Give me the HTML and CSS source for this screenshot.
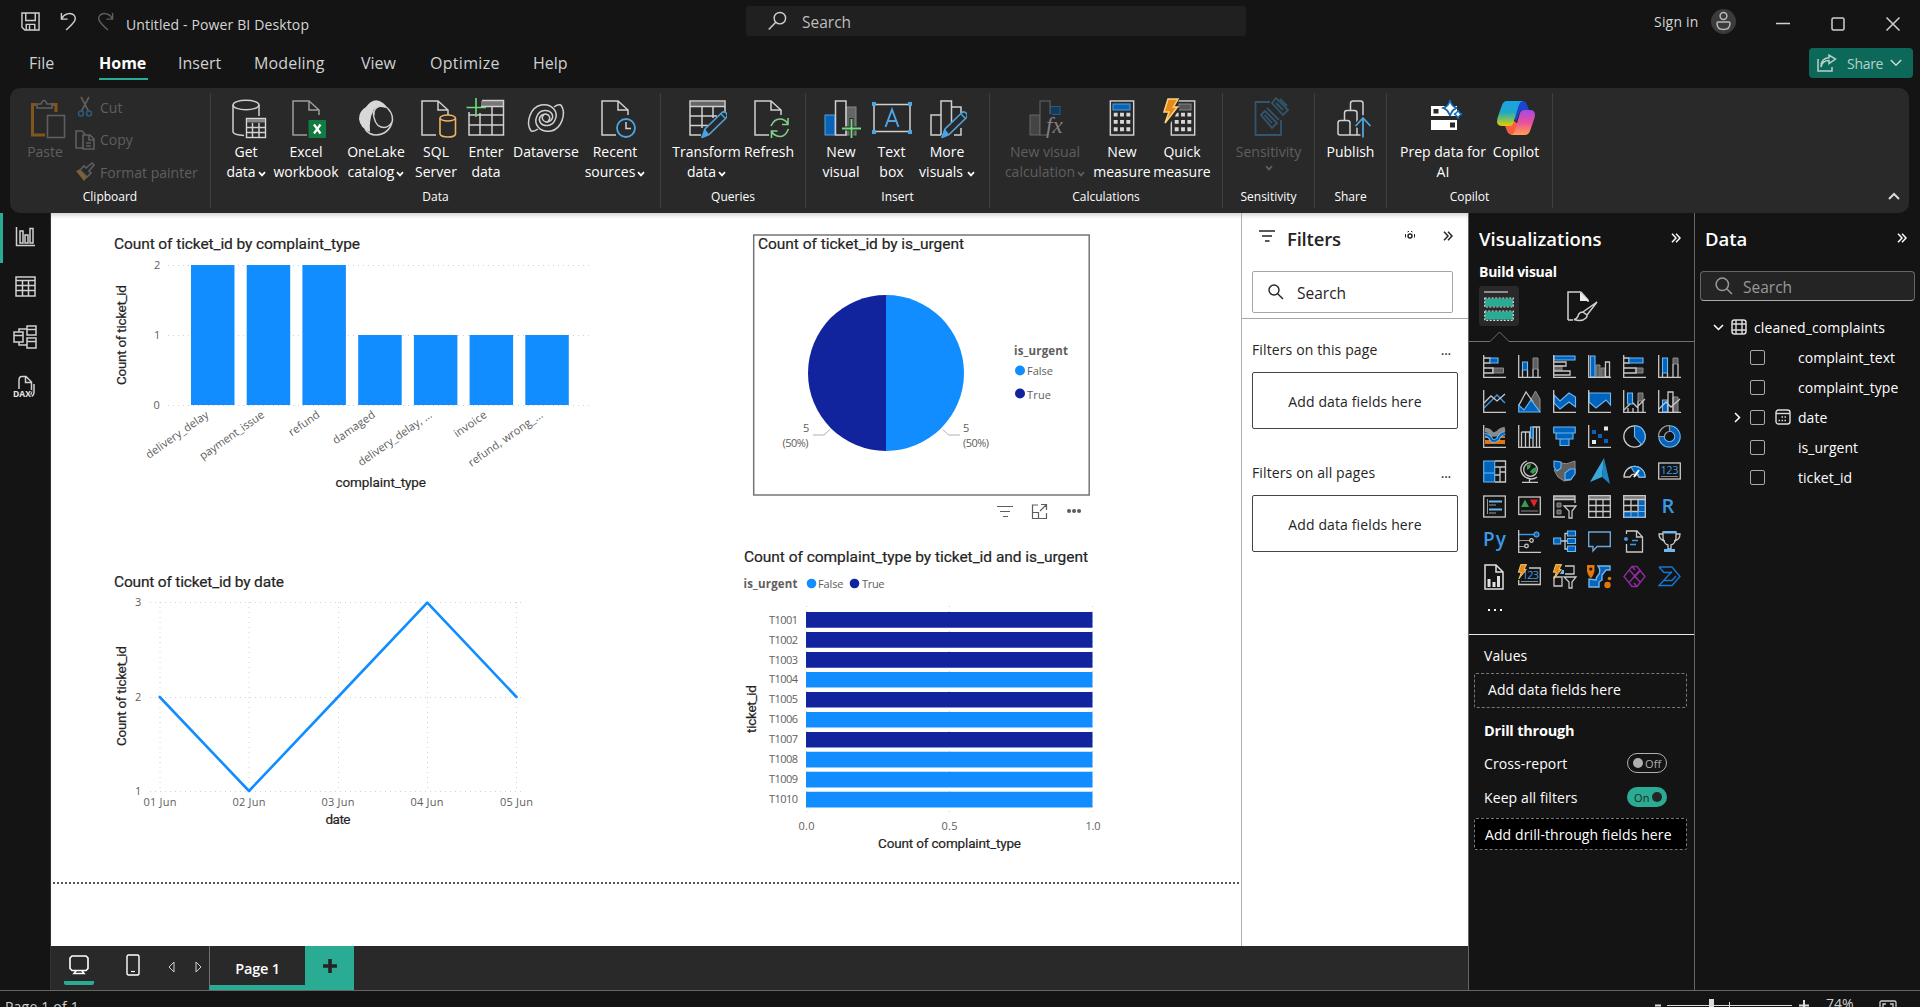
FILE: index.html
```html
<!DOCTYPE html>
<html lang="en">
<head>
<meta charset="utf-8">
<title>Untitled - Power BI Desktop</title>
<link rel="stylesheet" href="styles.css">
</head>
<body>
<svg class="defs" width="0" height="0">
  <defs>
    <symbol id="doc" viewBox="0 0 40 40"><path class="w" d="M33 17V12L23 3H7V37H21M23 3V12H33"/></symbol>
    <symbol id="pencil" viewBox="0 0 40 40"><path d="M15 39.5L18 31L35 14.5Q37 13 39.5 15.5Q41 18 39 20L22 36.5Z" fill="#292929" stroke="#4fa3e0" stroke-width="1.6"/><path d="M15 39.5L18 31L22 36.5Z" fill="#4fa3e0"/><path d="M34 16L38 20" stroke="#4fa3e0" stroke-width="1.4"/></symbol>
    <symbol id="calc" viewBox="0 0 26 37"><rect class="w" x="1" y="1" width="24" height="35"/><path fill="#d8d8d8" d="M4.500 13h4v4h-4zM11 13h4v4h-4zM17.500 13h4v4h-4zM4.500 20.500h4v4h-4zM11 20.500h4v4h-4zM17.500 20.500h4v4h-4zM4.500 28h4v4h-4zM11 28h4v4h-4zM17.500 28h4v4h-4z"/></symbol>
    <symbol id="chev" viewBox="0 0 8 6"><path d="M1 1.200L4 4.400L7 1.200" fill="none" stroke="currentColor" stroke-width="1.700"/></symbol>
    <symbol id="dbl" viewBox="0 0 10 10"><path d="M1 .8L5 5L1 9.200M5 .8L9 5L5 9.200" fill="none" stroke="currentColor" stroke-width="1.500"/></symbol>
    <symbol id="bolt" viewBox="0 0 18 27"><path d="M6 1H16L11.500 9H15.500L3 25L7 14H2Z" fill="#e58a1a" stroke="#ffd27a" stroke-width="1.500"/></symbol>
    <symbol id="axes" viewBox="0 0 23 23"><path class="v" d="M.7 0V22.300H23"/></symbol>
  </defs>
</svg>

<header class="titlebar">
  <svg class="save" viewBox="0 0 20 20"><path class="w" d="M1 1H19V19H4L1 16ZM5 1V9H15V1M5.500 19V13H14.500V19M9 14V19"/></svg>
  <svg class="undo" viewBox="0 0 18 20"><path class="w" d="M1.500 1V7.500H8M1.500 7.500C4 2 11 -.5 15 3.500C18.500 8 14 12 6.500 19"/></svg>
  <svg class="redo" viewBox="0 0 18 20"><path class="w" d="M16.500 1V7.500H10M16.500 7.500C14 2 7 -.5 3 3.500C-.5 8 4 12 11.500 19"/></svg>
  <span class="doc-title">Untitled - Power BI Desktop</span>
  <div class="top-search">
    <svg viewBox="0 0 20 20"><circle cx="12.500" cy="7" r="6" class="w"/><path class="w" d="M8.200 11.200L.8 19"/></svg>
    <span>Search</span>
  </div>
  <span class="signin">Sign in</span>
  <svg class="avatar" viewBox="0 0 25 25"><circle cx="12.500" cy="12.500" r="12.500" fill="#3b3b3b"/><circle class="a" cx="12.500" cy="7" r="3.400"/><path class="a" d="M6 14.200Q6 13 7.200 13H17.800Q19 13 19 14.200Q19 20.500 12.500 20.500Q6 20.500 6 14.200Z"/></svg>
  <svg class="wbtn min" viewBox="0 0 14 14"><path class="w" d="M0 6.500H14"/></svg>
  <svg class="wbtn max" viewBox="0 0 14 14"><rect class="w" x="1" y="1" width="12" height="12" rx="1.500"/></svg>
  <svg class="wbtn close" viewBox="0 0 14 14"><path class="w" d="M.5 .5L13.500 13.500M13.500 .5L.5 13.500"/></svg>
</header>

<nav class="tabs">
  <span class="t-file">File</span><span class="t-home on">Home</span><span class="t-ins">Insert</span><span class="t-mod">Modeling</span><span class="t-view">View</span><span class="t-opt">Optimize</span><span class="t-help">Help</span>
  <div class="share">
    <svg class="share-i" viewBox="0 0 20 18"><path fill="none" stroke="#b7d0cb" stroke-width="1.500" d="M1 5V17H15V13M4 13C5 8 8 6.500 12 6.500V9.500L18.500 5L12 1V3.800C7 4 4 7 4 13Z"/></svg>
    <span>Share</span>
    <svg class="share-c" viewBox="0 0 12 8"><path fill="none" stroke="#c9dbd7" stroke-width="1.500" d="M.8 1L6 6.300L11.200 1"/></svg>
  </div>
</nav>

<section class="ribbon">
  <div class="group g-clip">
    <div class="clip-body">
      <div class="rb dim paste">
        <svg class="ri" viewBox="0 0 40 40"><path d="M11 6.500H7.500V37H20M25 6.500H31V14" fill="none" stroke="#80561f" stroke-width="3"/><path d="M12 10V6H16Q19 -1 22 6H27V10Z" class="dg"/><rect x="22.500" y="17.500" width="17" height="22" class="dg"/></svg>
        <span>Paste</span>
      </div>
      <div class="clip-list dim">
        <div><svg viewBox="0 0 20 20"><path class="dg" d="M6 0L13.500 14M14 0L6.500 14"/><circle cx="6" cy="16.500" r="2.500" class="db"/><circle cx="14" cy="16.500" r="2.500" class="db"/></svg><span class="l-cut">Cut</span></div>
        <div><svg viewBox="0 0 20 20"><path class="dg" d="M8 18H1V1H7L10 4M8 5H15L19 9V19H8ZM14 5V10H19M11 13H16M11 16H16"/></svg><span class="l-copy">Copy</span></div>
        <div><svg viewBox="0 0 20 20"><path d="M1 9L9 19L13 14L6 7Z" fill="#80622e"/><path class="dg" d="M5 8L12 15L16 11L14 9L19 3L17 1L11 6L9 4Z"/></svg><span class="l-fmt">Format painter</span></div>
      </div>
    </div>
    <div class="gl">Clipboard</div>
  </div>

  <div class="group g-data">
    <div class="row">
      <div class="rb w48"><svg class="ri" viewBox="0 0 40 40"><path class="w" d="M7 7V34Q8 37 18 37.500M33 7V18"/><ellipse class="w" cx="20" cy="7" rx="13" ry="4.800"/><rect x="20.500" y="20.500" width="19" height="19" fill="#292929" stroke="#d8d8d8" stroke-width="1.400"/><path fill="#888" d="M21 21h18v3.500H21z"/><path class="w" d="M21 29.500H39M21 34.500H39M26.500 25V39M33 25V39"/></svg><span>Get</span><span>data<svg class="ch"><use href="#chev"/></svg></span></div>
      <div class="rb w72"><svg class="ri" viewBox="0 0 40 40"><use href="#doc" opacity=".7"/><rect x="22.500" y="22" width="17.500" height="18" fill="#107c41"/><path d="M28 26.500L34.500 35.500M34.500 26.500L28 35.500" stroke="#fff" stroke-width="2.200"/></svg><span>Excel</span><span>workbook</span></div>
      <div class="rb w68"><svg class="ri" viewBox="0 0 40 40"><path d="M10 9Q18 -2 27 5Q31 8 30 10Q20 7 17 13Q13 22 14 34Q4 30 3 21Q3 13 10 9Z" fill="#d8d8d8"/><path class="w" d="M29 8Q37 14 36.500 22Q34 36 20 37Q13 37 9 31M17 13Q18 27 25 29Q32 31 36 24M24 8Q17 10 18 17"/></svg><span>OneLake</span><span>catalog<svg class="ch"><use href="#chev"/></svg></span></div>
      <div class="rb w52"><svg class="ri" viewBox="0 0 40 40"><use href="#doc" x="-1"/><path d="M24 20V36Q25 39 32 39T39.500 36V20" fill="#292929" stroke="#f0b266" stroke-width="1.600"/><ellipse cx="31.700" cy="20" rx="7.700" ry="3" fill="#292929" stroke="#f0b266" stroke-width="1.600"/></svg><span>SQL</span><span>Server</span></div>
      <div class="rb w48"><svg class="ri" viewBox="0 0 40 40"><path fill="#777" d="M15 3H37V8H15z"/><path class="w" d="M16 2.500H37.500V37H3V14M3 17H37.500M3 27H37.500M14 15V37M26 9V37M15 8.500H37"/><path d="M10 0V19M.5 9.500H20" stroke="#6fdc7c" stroke-width="1.600"/></svg><span>Enter</span><span>data</span></div>
      <div class="rb w72"><svg class="ri" viewBox="0 0 40 40"><g class="w"><path d="M5 33C-1 24 5 9 15 7C26 5 33 14 29 22C26 29 17 29 14 24C12 20 15 16 20 16C24 17 25 21 22 23"/><path d="M35 7C41 16 35 31 25 33C14 35 7 26 11 18C14 11 23 11 26 16C28 20 25 24 20 24C16 23 15 19 18 17M5 33Q8 34 12 31M35 7Q32 6 28 9"/></g></svg><span>Dataverse</span></div>
      <div class="rb w66"><svg class="ri" viewBox="0 0 40 40"><use href="#doc"/><circle cx="31" cy="30" r="9" fill="#292929" stroke="#4fa3e0" stroke-width="1.800"/><path class="w" d="M31 24V30.500H36"/></svg><span>Recent</span><span>sources<svg class="ch"><use href="#chev"/></svg></span></div>
    </div>
    <div class="gl">Data</div>
  </div>

  <div class="group g-q">
    <div class="row">
      <div class="rb w71"><svg class="ri" viewBox="0 0 40 40"><path fill="#666" d="M3.500 4h34v4h-34z"/><path class="w" d="M38 14V3H3V37H14M3 8.500H38M3 18H30M3 27.500H21M15 9V30M26 9V20"/><use href="#pencil"/></svg><span>Transform</span><span>data<svg class="ch"><use href="#chev"/></svg></span></div>
      <div class="rb w54"><svg class="ri" viewBox="0 0 40 40"><use href="#doc" x="-1"/><path d="M22 28Q25 21 31 21Q36 21 39 26M39 20V26.500H33M39.500 31Q36 39 31 38.500Q25 38 22.500 33.500M22.500 40V33H28.500" fill="none" stroke="#7fd08a" stroke-width="1.600"/></svg><span>Refresh</span></div>
    </div>
    <div class="gl">Queries</div>
  </div>

  <div class="group g-i">
    <div class="row">
      <div class="rb w48"><svg class="ri" viewBox="0 0 40 40"><rect x="25" y="9" width="10" height="28" fill="#666" stroke="#888"/><rect x="4" y="17" width="10" height="20" fill="#0a63b8" stroke="#4fa3e0"/><rect class="w" x="14.500" y="3" width="10.500" height="34"/><path d="M21 30.500H40M30.500 20V40" stroke="#292929" stroke-width="4"/><path d="M21 30.500H40M30.500 21V40" stroke="#6fdc7c" stroke-width="1.800"/></svg><span>New</span><span>visual</span></div>
      <div class="rb w53"><svg class="ri" viewBox="0 0 40 40"><rect class="w" x="2" y="6.500" width="36" height="27"/><path fill="#4fa3e0" d="M0 4h4v4H0zM36 4h4v4h-4zM0 32h4v4H0zM36 32h4v4h-4z"/><path d="M13.500 29L20 11.500L26.500 29M15.500 23H24.500" fill="none" stroke="#4fa3e0" stroke-width="2"/></svg><span>Text</span><span>box</span></div>
      <div class="rb w58"><svg class="ri" viewBox="0 0 40 40"><path class="w" d="M14 37H4V17H14M14 37V3H24.500V24M25 9H34V15M27 37H34V30"/><use href="#pencil"/></svg><span>More</span><span>visuals<svg class="ch sp"><use href="#chev"/></svg></span></div>
    </div>
    <div class="gl">Insert</div>
  </div>

  <div class="group g-c">
    <div class="row">
      <div class="rb w90 dim"><svg class="ri" viewBox="0 0 40 40"><rect x="25" y="8.500" width="10" height="8" fill="#103a5e" stroke="#2a5c80"/><rect x="5" y="17" width="10" height="20" fill="#444" stroke="#666"/><rect x="15" y="3" width="10" height="34" fill="#292929" stroke="#666"/><path stroke="#292929" stroke-width="4" d="M25 16L25 40"/><text x="21" y="35" class="fx">fx</text></svg><span>New visual</span><span>calculation<svg class="ch"><use href="#chev"/></svg></span></div>
      <div class="rb w64"><svg class="ri" viewBox="0 0 40 40"><use href="#calc" x="7" y="2" width="26" height="36"/><rect x="11" y="6" width="17" height="6" fill="#0a63b8" stroke="#4fa3e0"/></svg><span>New</span><span>measure</span></div>
      <div class="rb w56"><svg class="ri" viewBox="0 0 40 40"><use href="#calc" x="8" y="2" width="26" height="36"/><rect x="17" y="6" width="12" height="6" fill="#555" stroke="#888"/><path d="M5 0H18L14 9L18 10L8 26H3Z" fill="#292929"/><use href="#bolt" x="0" y="0" width="18" height="27"/></svg><span>Quick</span><span>measure</span></div>
    </div>
    <div class="gl">Calculations</div>
  </div>

  <div class="group g-s">
    <div class="row">
      <div class="rb w92 dim"><svg class="ri" viewBox="0 0 40 40"><g fill="none" stroke="#31566e" stroke-width="1.800"><path d="M21 4H6.500V37H32V22"/><path d="M12 17L16 13L28 25L23 30ZM15.500 17L23 25M18 10L30 22M23 5L27 0L39 12L34 17ZM27 5L34 12M31 1L38 8"/></g></svg><span>Sensitivity</span><span><svg class="ch solo"><use href="#chev"/></svg></span></div>
    </div>
    <div class="gl">Sensitivity</div>
  </div>

  <div class="group g-p">
    <div class="row">
      <div class="rb w72"><svg class="ri" viewBox="0 0 40 40"><path class="w" d="M30 37H9Q7 37 7 35V25Q7 22.500 9.500 22.500H16.500Q19 22.500 19 25V37M13.500 22V15Q13.500 12.500 16 12.500H23.500Q26 12.500 26 15V37M19.500 12V5.500Q19.500 3 22 3H29.500Q32 3 32 5.500V18"/><path d="M32 39.500V21M24.500 28.500L32 20.500L39.500 28.500" fill="none" stroke="#292929" stroke-width="5"/><path d="M32 39.500V20M24.500 28L32 20L39.500 28" fill="none" stroke="#4fa3e0" stroke-width="1.800"/></svg><span>Publish</span></div>
    </div>
    <div class="gl">Share</div>
  </div>

  <div class="group g-ai">
    <div class="row">
      <div class="rb w92"><svg class="ri" viewBox="0 0 40 40"><path fill="#fff" fill-rule="evenodd" d="M8 8H34V18H8ZM10.500 11V15.500H15.500V11ZM8 22H34V32H8ZM27 24.500V29.500H32V24.500Z"/><path d="M27 0Q29 8.500 36 10Q29 11.500 27 20Q25 11.500 18 10Q25 8.500 27 0Z" fill="#292929"/><path d="M27 2Q28.500 9 34 10Q28.500 11 27 18Q25.500 11 20 10Q25.500 9 27 2Z" fill="#fff" stroke="#0c6fc0" stroke-width="1.400"/><path d="M35 12Q35.800 15.500 39 16.200Q35.800 17 35 20.500Q34 17 31 16.200Q34 15.500 35 12Z" fill="#fff" stroke="#0c6fc0" stroke-width="1.200"/></svg><span>Prep data for</span><span>AI</span></div>
      <div class="rb w54"><svg class="ri" viewBox="0 0 40 40"><defs><linearGradient id="c1" x1="0" y1="0" x2="0" y2="1"><stop offset="0" stop-color="#1aa3ea"/><stop offset=".45" stop-color="#20a7c5"/><stop offset=".75" stop-color="#7cc25a"/><stop offset="1" stop-color="#f4c800"/></linearGradient><linearGradient id="c2" x1="0" y1="0" x2="0" y2="1"><stop offset="0" stop-color="#a14be8"/><stop offset=".5" stop-color="#ec4e9b"/><stop offset="1" stop-color="#ffa24d"/></linearGradient></defs><path d="M23 3H27Q30 3 31.500 8L33 12H27Q24 12 23 16L20 24L17 17Z" fill="#1a47d0"/><path d="M9 28L11 33Q12.500 37 17 37L23 27L17 22L11 28Z" fill="#f2603d"/><path d="M11 3H27Q24 3.500 22.500 8L17 26Q16 28 13 28H6Q-.5 28 1.500 20L6 7Q7.500 3 11 3Z" fill="url(#c1)"/><path d="M29 37H15Q18 36 19 32L24 15Q25 12 28 12H34Q40.500 12 38.500 20L34 33Q32.500 37 29 37Z" fill="url(#c2)"/></svg><span>Copilot</span></div>
    </div>
    <div class="gl">Copilot</div>
  </div>
  <svg class="collapse" viewBox="0 0 12 8"><path fill="none" stroke="#d8d8d8" stroke-width="2" d="M1 7L6 2L11 7"/></svg>
</section>

<main class="work">
  <aside class="rail">
    <div class="on"><svg width="20" height="20" viewBox="0 0 20 20"><path class="w" d="M1.500 0V18.500H20M5 16V4H8V16ZM10 16V8H13V16ZM15 16V1.500H18V16Z"/></svg></div>
    <div><svg width="21" height="21" viewBox="0 0 21 21"><path class="w" d="M1 1H20V20H1ZM1 4.500H20M1 9.500H20M1 14.500H20M7.500 4.500V20M13.500 4.500V20"/></svg></div>
    <div><svg width="24" height="24" viewBox="0 0 24 24"><path class="w" d="M1 7H10V17H1ZM1 10.500H10M14 1H23V10H14ZM14 4.500H23M14 13H23V23H14ZM14 16.500H23M6 7V4H14M6 17V20H14"/></svg></div>
    <div><svg width="24" height="24" viewBox="0 0 24 24"><path class="w" d="M6 14V5Q6 1.500 9 1.500H13L18.500 7V17Q18.500 20 16 20.500M12.500 2V7.500H18M21 9V17Q21 21 17 22"/><text x="0" y="21.500" class="dax">DAX</text></svg></div>
  </aside>

  <div class="center">
    <div class="upper">
      <div class="canvas">
        <svg class="visual v-bar" width="500" height="270" viewBox="104 230 500 270">
          <text class="ct" x="114" y="249" textLength="246">Count of ticket_id by complaint_type</text>
          <path class="grid" d="M168 265.500H593M168 335.500H593M168 405.500H593"/>
          <g class="ax"><text x="154" y="269">2</text><text x="154" y="339">1</text><text x="153.500" y="409">0</text></g>
          <path fill="#118dff" d="M191 265h43.500v140H191zM246.700 265h43.500v140h-43.500zM302.400 265h43.500v140h-43.500zM358.200 335h43.500v70h-43.500zM413.900 335h43.500v70h-43.500zM469.600 335h43.500v70h-43.500zM525.300 335h43.500v70h-43.500z"/>
          <g class="cat">
            <text transform="translate(209.500 416.500) rotate(-35)" textLength="74">delivery_delay</text>
            <text transform="translate(265 416.500) rotate(-35)" textLength="76">payment_issue</text>
            <text transform="translate(320.500 416.500) rotate(-35)" textLength="35">refund</text>
            <text transform="translate(376 416.500) rotate(-35)" textLength="49">damaged</text>
            <text transform="translate(432.500 416.500) rotate(-35)" textLength="87">delivery_delay, ...</text>
            <text transform="translate(487.500 416.500) rotate(-35)" textLength="37">invoice</text>
            <text transform="translate(543.500 416.500) rotate(-35)" textLength="88">refund, wrong_...</text>
          </g>
          <text class="at" x="335.500" y="487" textLength="90.500">complaint_type</text>
          <text class="at" transform="translate(126 385) rotate(-90)" textLength="100">Count of ticket_id</text>
        </svg>

        <svg class="visual v-pie" width="340" height="290" viewBox="752 232 340 290">
          <rect x="753.700" y="235" width="335.500" height="260" fill="#fff" stroke="#767676" stroke-width="1.500"/>
          <text class="ct" x="758" y="249" textLength="206">Count of ticket_id by is_urgent</text>
          <path d="M886 295A78 78 0 0 1 886 451Z" fill="#118dff"/>
          <path d="M886 295A78 78 0 0 0 886 451Z" fill="#12239e"/>
          <path d="M813 435H824L830 429.500M943 429.500L948.500 435H960" fill="none" stroke="#b3b0ad"/>
          <g class="ax"><text x="803" y="432">5</text><text x="782.500" y="447" textLength="26">(50%)</text><text x="963" y="432">5</text><text x="963" y="447" textLength="26">(50%)</text></g>
          <text class="lt" x="1014" y="355" textLength="54">is_urgent</text>
          <circle cx="1020" cy="370.500" r="5" fill="#118dff"/><text class="lg" x="1027" y="375" textLength="26">False</text>
          <circle cx="1020" cy="393.500" r="5" fill="#12239e"/><text class="lg" x="1027" y="398.500" textLength="24">True</text>
          <path d="M997 506.500H1013M1000 511.500H1010M1003 516.500H1008M1038 505H1032.500V518.500H1046.500V513M1032.500 512.500H1038.500V518M1040 511L1046.500 504.500M1041 504.500H1046.500V510" fill="none" stroke="#605e5c" stroke-width="1.200"/>
          <path d="M1069 511h.1M1074 511h.1M1079 511h.1" stroke="#605e5c" stroke-width="4" stroke-linecap="round" fill="none"/>
        </svg>

        <svg class="visual v-line" width="430" height="270" viewBox="104 570 430 270">
          <text class="ct" x="114" y="587" textLength="170">Count of ticket_id by date</text>
          <path class="grid" d="M150 602.500H524M150 697.500H524M150 791.500H524M160 602V791M249 602V791M338.500 602V791M427.500 602V791M516.500 602V791"/>
          <g class="ax"><text x="135" y="606">3</text><text x="135" y="701">2</text><text x="135" y="795">1</text>
            <text x="143.500" y="806" textLength="33">01 Jun</text><text x="232.500" y="806" textLength="33">02 Jun</text><text x="321.500" y="806" textLength="33">03 Jun</text><text x="410.500" y="806" textLength="33">04 Jun</text><text x="500" y="806" textLength="33">05 Jun</text></g>
          <path d="M159.700 697L249 791L338 697L427.300 602.700L516.500 697" fill="none" stroke="#118dff" stroke-width="2.600" stroke-linecap="round" stroke-linejoin="round"/>
          <text class="at" x="325.500" y="824" textLength="25">date</text>
          <text class="at" transform="translate(126 746) rotate(-90)" textLength="100">Count of ticket_id</text>
        </svg>

        <svg class="visual v-stack" width="380" height="310" viewBox="736 545 380 310">
          <text class="ct" x="744" y="562" textLength="344">Count of complaint_type by ticket_id and is_urgent</text>
          <text class="lt" x="743.500" y="588" textLength="54">is_urgent</text>
          <circle cx="811.500" cy="583.500" r="4.800" fill="#118dff"/><text class="lg" x="818" y="588" textLength="25.500">False</text>
          <circle cx="854.500" cy="583.500" r="4.800" fill="#12239e"/><text class="lg" x="862" y="588" textLength="22.500">True</text>
          <path class="grid" d="M806.500 606V816M949.500 606V816M1092.500 606V816"/>
          <path fill="#12239e" d="M806 612h286.500v15.700H806zM806 632h286.500v15.700H806zM806 652h286.500v15.700H806zM806 691.900h286.500v15.700H806zM806 731.900h286.500v15.700H806z"/>
          <path fill="#118dff" d="M806 671.900h286.500v15.700H806zM806 711.900h286.500v15.700H806zM806 751.800h286.500v15.700H806zM806 771.800h286.500v15.700H806zM806 791.800h286.500v15.700H806z"/>
          <g class="ax">
            <text x="769" y="624" textLength="29">T1001</text><text x="769" y="644" textLength="29">T1002</text><text x="769" y="664" textLength="29">T1003</text><text x="769" y="683" textLength="29">T1004</text><text x="769" y="703" textLength="29">T1005</text><text x="769" y="723" textLength="29">T1006</text><text x="769" y="743" textLength="29">T1007</text><text x="769" y="763" textLength="29">T1008</text><text x="769" y="783" textLength="29">T1009</text><text x="769" y="803" textLength="29">T1010</text>
            <text x="798.500" y="830" textLength="16">0.0</text><text x="941.500" y="830" textLength="16">0.5</text><text x="1085.500" y="830" textLength="15">1.0</text></g>
          <text class="at" x="878" y="848" textLength="143">Count of complaint_type</text>
          <text class="at" transform="translate(756 733) rotate(-90)" textLength="48">ticket_id</text>
        </svg>
        <svg class="page-edge" viewBox="0 0 1187 2" width="1187" height="2"><path d="M0 1H1187" stroke="#555" stroke-width="2" stroke-dasharray="2 2"/></svg>
      </div>

      <aside class="filters">
        <div class="f-head">
          <svg width="17" height="12" viewBox="0 0 17 12"><path d="M0 1H16M3 6H13M6 11H10.500" stroke="#252423" stroke-width="1.700"/></svg>
          <h2>Filters</h2>
          <svg class="eye" width="12" height="10" viewBox="0 0 12 10"><circle cx="6" cy="6" r="2" fill="none" stroke="#252423" stroke-width="1.500"/><path d="M1.500 7.500V4M3.500 2L5 1.200M7 1.200L8.500 2M10.500 4V7.500" fill="none" stroke="#252423"/></svg>
          <svg class="fx2" width="10" height="10"><use href="#dbl"/></svg>
        </div>
        <div class="f-search"><svg width="16" height="16" viewBox="0 0 16 16"><circle cx="6" cy="6" r="5" fill="none" stroke="#252423" stroke-width="1.400"/><path d="M9.700 9.700L15 15" stroke="#252423" stroke-width="1.400"/></svg><span>Search</span></div>
        <div class="f-sec first"><span>Filters on this page</span><i>...</i></div>
        <div class="f-box">Add data fields here</div>
        <div class="f-sec"><span>Filters on all pages</span><i>...</i></div>
        <div class="f-box">Add data fields here</div>
      </aside>
    </div>

    <footer class="pages">
      <div class="mon"><svg width="20" height="20" viewBox="0 0 20 20"><path d="M3 1H17L19 3V13.500L17 15.500H3L1 13.500V3ZM7 16L5 18.500H15L13 16" fill="none" stroke="#fff" stroke-width="1.600"/></svg></div>
      <svg class="phone" width="14" height="22" viewBox="0 0 14 22"><rect x="1" y="1" width="12" height="20" rx="1.500" fill="none" stroke="#fff" stroke-width="1.400"/><path d="M5 17.500H9" stroke="#fff" stroke-width="1.200"/></svg>
      <svg class="tl" width="7" height="12" viewBox="0 0 7 12"><path d="M6 1V11L1 6Z" fill="none" stroke="#d0d0d0"/></svg>
      <svg class="tr" width="7" height="12" viewBox="0 0 7 12"><path d="M1 1V11L6 6Z" fill="none" stroke="#d0d0d0"/></svg>
      <div class="ptab">Page 1</div>
      <div class="padd"><svg width="14" height="14" viewBox="0 0 14 14"><path d="M7 0V14M0 7H14" stroke="#252423" stroke-width="3.600"/></svg></div>
    </footer>
  </div>

  <aside class="viz">
    <div class="p-head"><h2>Visualizations</h2><svg width="10" height="10"><use href="#dbl"/></svg></div>
    <h3>Build visual</h3>
    <div class="modes">
      <div class="mode on"><svg width="30" height="30" viewBox="0 0 30 30"><path d="M0 1H24" stroke="#aaa" stroke-width="1.600"/><path fill="#2aac94" d="M1 7.500h28v8H1zM1 20.500h28v8H1z"/><path d="M.7 7H29.300V16H.7ZM.7 20H29.300V29.300H.7Z" fill="none" stroke="#ddd" stroke-width="1.200" stroke-dasharray="2 1.500"/></svg></div>
      <svg class="paint" width="31" height="30" viewBox="0 0 31 30"><path class="w" d="M1 29V1H14M21 11V9L14 1M1 29H6"/><path d="M13 1L22 10H13Z" fill="#eee"/><path class="w" d="M30 11L20 24L16 21ZM16 21Q12 21 11 25Q10 28 7 28.500Q15 31 19 27Q20.500 25.500 20 24"/></svg>
    </div>
    <svg class="caret" width="226" height="11" viewBox="0 0 226 11"><path d="M0 10.500H21L30.500 1L40 10.500H226" fill="none" stroke="#707070"/></svg>
    <div class="icons">
      <svg viewBox="0 0 23 23"><path class="f" d="M9.500 13h11v5h-11z"/><path class="v" d="M1 3h6v5H1M1 13h9v5H1"/><path class="b" d="M7 3h8v5H7z"/><use href="#axes"/></svg>
      <svg viewBox="0 0 23 23"><path class="f" d="M15 3h5v11h-5z"/><path class="v" d="M4.500 15v7M9.500 15v7M15 14v8M20 14v8"/><path class="b" d="M4.500 7h5v8h-5z"/><use href="#axes"/></svg>
      <svg viewBox="0 0 23 23"><path class="f" d="M1 11h8v4H1z"/><path class="v" d="M1 7h12v4H1M1 16h16v4H1"/><path class="b" d="M1 1h21v4H1z"/><use href="#axes"/></svg>
      <svg viewBox="0 0 23 23"><path class="f" d="M8 10h4v12H8zM13 13h4v9h-4z"/><path class="v" d="M17.500 7h4v15h-4z"/><path class="b" d="M2.500 1h4.500v21H2.500z"/><use href="#axes"/></svg>
      <svg viewBox="0 0 23 23"><path class="f" d="M13 13h7v5h-7z"/><path class="v" d="M1 3h5v5H1M1 13h12v5H1"/><path class="b" d="M6 3h14v5H6z"/><use href="#axes"/></svg>
      <svg viewBox="0 0 23 23"><path class="f" d="M15 3h5v6h-5z"/><path class="v" d="M4.500 18v4M9.500 18v4M15 9v13M20 9v13"/><path class="b" d="M4.500 3h5v15h-5z"/><use href="#axes"/></svg>

      <svg viewBox="0 0 23 23"><path d="M1 18L14 5L22 13" fill="none" stroke="#3a9ae8" stroke-width="1.400"/><path class="v" d="M1 13L8 6L14 11L22 4"/><use href="#axes"/></svg>
      <svg viewBox="0 0 23 23"><path class="f" d="M11 13L17.500 1L22 9V22Z"/><path class="v" d="M1 15L8 2L15 12"/><path class="b" d="M.7 22V15L6 20L13 10L22 22Z"/></svg>
      <svg viewBox="0 0 23 23"><path class="b" d="M1 5L7 11L16 3L22.500 7V17L16 12L7 19L1 13Z"/><use href="#axes"/></svg>
      <svg viewBox="0 0 23 23"><path class="b" d="M1 3H22.500V15L18 10L8 18L1 12Z"/><use href="#axes"/></svg>
      <svg viewBox="0 0 23 23"><path class="f" d="M15 3h5v8h-5z"/><path class="v" d="M15 11v11M20 11v11M5 18v4M10 18v4M1 20L9 12L14 17L22 9"/><path class="b" d="M4.500 3h5v11h-5z"/><use href="#axes"/></svg>
      <svg viewBox="0 0 23 23"><path class="f" d="M15 7h5v15h-5z"/><path class="b" d="M4.500 10h5v12h-5z"/><path class="v" d="M10 22V2h5v20M1 19L8 12L13 17L22 9"/><use href="#axes"/></svg>

      <svg viewBox="0 0 23 23"><path fill="#e0760c" d="M2 11H6V13H2ZM18 11H22V13H18ZM2 15H22V19H2Z"/><path fill="none" stroke="#8a8a8a" stroke-width="4.500" d="M2 5Q6 5 8 8T15 8Q17 5 22 4"/><path d="M2 10Q6 10 8 14T15 14Q17 9 22 8" fill="none" stroke="#6cb8f0" stroke-width="4"/><path d="M2 10Q6 10 8 14T15 14Q17 9 22 8" fill="none" stroke="#0a63b8" stroke-width="2"/><use href="#axes"/></svg>
      <svg viewBox="0 0 23 23"><path class="v" d="M3.500 7h4v15M3.500 22V7M7.500 7h4v15M15 22V2h3.500v20M18.500 2h3v20"/><path class="b" d="M12.500 13V2h2.500v11z"/><use href="#axes"/></svg>
      <svg viewBox="0 0 23 23"><path class="b" d="M.7 2h21.500v6H.7zM3 8h17v6H3zM7 14h9v6.500H7z"/></svg>
      <svg viewBox="0 0 23 23"><path fill="#e8e8e8" d="M16 1.500h4v4h-4zM4 15h4v4H4z"/><path fill="#0a63b8" d="M4 5h4v4H4zM10 9h4v4h-4zM16 14h4v4h-4z"/><use href="#axes"/></svg>
      <svg viewBox="0 0 23 23"><circle class="v" cx="11.500" cy="11.500" r="10.700"/><path class="b" d="M11.500 .8A10.700 10.700 0 0 1 18.500 19.500L11.500 11.500Z"/></svg>
      <svg viewBox="0 0 23 23"><circle cx="11.500" cy="11.500" r="8" fill="none" stroke="#6cb8f0" stroke-width="6.500"/><circle cx="11.500" cy="11.500" r="8" fill="none" stroke="#0a63b8" stroke-width="4.500"/><path d="M.5 11.500A11 11 0 0 1 11.500 .5V6.500A5 5 0 0 0 6.500 11.500Z" fill="#141414" stroke="#999" stroke-width="1.200"/></svg>

      <svg viewBox="0 0 23 23"><path class="v" d="M12 1h10.500v21H12M12 7H22M12 15H17M17 7V22M17 12H22"/><path class="b" d="M.7 1h11v21H.7zM.7 13H11"/></svg>
      <svg viewBox="0 0 23 23"><circle class="v" cx="12.500" cy="9.500" r="6.800"/><path fill="#3a9a50" d="M9 5L13 4L12 8L9 10ZM14 9L18 7L18.500 11L15 14L12 12Z"/><path class="v" d="M9 1Q2 4 3 11Q5 18 13 19Q17 19 19 17M11.500 19V22M4 22.300H20"/></svg>
      <svg viewBox="0 0 23 23"><path class="f" d="M8 3Q14 5 19 2L22 1V13L18 20L11 21L5 17L1 10Z"/><path class="b" d="M1 1L8 2V8L4 11L1 7ZM22 9V14L18 19L12 20V13L17 9Z"/></svg>
      <svg viewBox="0 0 23 25" class="tall"><path fill="#3aa8d8" d="M16 -2L2 22L14 17Z"/><path fill="#1d86c2" d="M16 -2L22 24L14 17Z"/></svg>
      <svg viewBox="0 0 23 23"><path d="M1 17A10.500 10.500 0 0 1 22 17H16A5 5 0 0 0 7 17Z" class="v"/><path class="b" d="M8 7A10.500 10.500 0 0 1 22 17H16A5 5 0 0 0 11 12Z"/><path d="M11 17L16 10" stroke="#fff" stroke-width="2"/></svg>
      <svg viewBox="0 0 23 23"><rect class="v" x=".7" y="3" width="21.600" height="16"/><text x="2.500" y="14" class="n123" textLength="18">123</text><path stroke="#888" d="M3 16.500H20"/></svg>

      <svg viewBox="0 0 23 23"><rect class="v" x=".7" y="1" width="21.600" height="21"/><path stroke="#999" d="M4.500 4V19M6 10H13M6 18H13"/><path stroke="#6cb8f0" stroke-width="2" d="M6 6.500H19M6 14.500H19"/></svg>
      <svg viewBox="0 0 23 23"><rect class="v" x=".7" y="2" width="21.600" height="17.500"/><path fill="#3a9a50" d="M3 12L7 4.500L11 12Z"/><path fill="#e02525" d="M12 4.500H20L16 12Z"/><path stroke="#888" d="M3 16H20"/></svg>
      <svg viewBox="0 0 23 23"><path fill="#777" d="M1 1h21v3H1z"/><path class="v" d="M22 8V1H.7V22H12M1 4.500H22"/><path class="f" d="M4 8h4v4H4zM4 15h4v4H4z"/><path class="v" d="M11 11H23L19 16V23H16V16Z"/></svg>
      <svg viewBox="0 0 23 23"><path fill="#777" d="M1 1h21v3H1z"/><path class="v" d="M.7 .7H22.300V22.300H.7ZM1 4.500H22M1 10.500H22M1 16.500H22M8 4V22M15 4V22"/></svg>
      <svg viewBox="0 0 23 23"><path fill="#777" d="M1 1h21v3H1z"/><path fill="#0a63b8" d="M15 5h7v17H1v-6h14z"/><path class="v" d="M.7 .7H22.300V22.300H.7ZM1 4.500H22M1 10.500H15M1 16.500H15M8 4V16M15 4V16"/><path stroke="#6cb8f0" d="M15 10.500H22M15 16.500H22M8 16V22M15 16V22M1 22.300H22"/></svg>
      <svg viewBox="0 0 23 23"><text x="3.500" y="18" class="rt">R</text></svg>

      <svg viewBox="0 0 23 23"><text x="0" y="16" class="py" textLength="23">Py</text></svg>
      <svg viewBox="0 0 23 23"><path d="M1 4.500H16" stroke="#3a9ae8" stroke-width="1.400"/><circle cx="18.500" cy="4.500" r="2.600" fill="#0a63b8" stroke="#6cb8f0"/><path stroke="#999" d="M1 10.500H12M1 16.500H7"/><circle cx="13.500" cy="10.500" r="1.800" class="v"/><circle cx="8.500" cy="16" r="1.800" class="v"/><use href="#axes"/></svg>
      <svg viewBox="0 0 23 23"><path class="v" d="M8 11H15M15 3.500H12V19H15"/><path class="b" d="M.7 8h7v6h-7zM14.500 1h8v5h-8zM14.500 8.500h8v5h-8zM14.500 16h8v5.500h-8z"/></svg>
      <svg viewBox="0 0 23 23"><path d="M.7 2H22.300V16.500H9L5 21V16.500H.7Z" fill="none" stroke="#6aa6d8" stroke-width="1.400"/></svg>
      <svg viewBox="0 0 23 23"><path class="v" d="M3.500 4V1H14L19.500 7V22H3.500V14M13.500 1V7H19"/><path stroke="#3a9ae8" stroke-width="1.400" d="M9 10.500H15M7 14.500H13"/><circle cx="3" cy="9" r="2" fill="#3a9ae8"/></svg>
      <svg viewBox="0 0 23 23"><path class="v" d="M5 2H18V8Q17 14 13 15V19H10V15Q6 14 5 8ZM5 4H1Q1 10 7 11M18 4H22Q22 10 16 11"/><path fill="#6cb8f0" d="M5 1h13v2.500H5zM6 19h11v3H6z"/></svg>

      <svg viewBox="0 0 23 25" class="tall"><path d="M2 0H13L20 7V24H2ZM13 0V7H20" fill="none" stroke="#e0e0e0" stroke-width="1.500"/><path fill="#e0e0e0" d="M4.500 14h3v8h-3zM9.500 17h3v5h-3zM14 11h3v11h-3z"/></svg>
      <svg viewBox="0 0 23 23"><path class="v" d="M11 3H22.300V19.500H.7V15"/><text x="4" y="14" class="n123" textLength="17">123</text><path stroke="#888" d="M3 16.500H20"/><use href="#bolt" x="-1" y="-1" width="11" height="16"/></svg>
      <svg viewBox="0 0 23 23"><path class="v" d="M12 1H21V9H12M1 12H9V21H1ZM11 12H23L19 17V23H16V17Z"/><path fill="#6cb8f0" d="M9 5h2v4H7z"/><use href="#bolt" x="-1" y="-1" width="11" height="16"/></svg>
      <svg viewBox="0 0 23 23"><path fill="#0a63b8" stroke="#6cb8f0" stroke-width="1.400" d="M1 14V22H11V17L14 15V10L18 5H22V1H10Q13 5 11 9Q8 12 8 15Z"/><path fill="#e0760c" d="M-1 0H6.500V6Q5 12 2.700 13Q0 11 -1 6Z"/><circle cx="2.800" cy="4" r="1.600" fill="#141414"/><circle cx="19.500" cy="20" r="3.200" fill="#e0760c"/><circle cx="21.500" cy="13.500" r="1.800" fill="#e0760c"/></svg>
      <svg viewBox="0 0 23 23"><path d="M9 1.500H14L22 11.500L14 21.500H9L1 11.500ZM6.500 5L17 17M17 5L6.500 17M12 11.500L17 6M12 11.500L17 17M9 1.500L12 5M14 21.500L11 18" fill="none" stroke="#8f2aa0" stroke-width="1.400"/></svg>
      <svg viewBox="0 0 23 23"><path d="M1 2H14L22 11.500L14 20.500H1L14 6.500M1 2L6 7.500H14M6 15.500H14L18 11" fill="none" stroke="#1477d4" stroke-width="1.400"/></svg>
    </div>
    <div class="dots"><b></b><b></b><b></b></div>
    <div class="wells">
      <div class="lab">Values</div>
      <div class="well">Add data fields here</div>
      <h4>Drill through</h4>
      <div class="tg"><span class="cr">Cross-report</span><div class="toggle off"><b></b><span>Off</span></div></div>
      <div class="tg keep"><span>Keep all filters</span><div class="toggle ont"><span>On</span><b></b></div></div>
      <div class="well black">Add drill-through fields here</div>
    </div>
  </aside>

  <aside class="data">
    <div class="p-head"><h2>Data</h2><svg width="10" height="10"><use href="#dbl"/></svg></div>
    <div class="d-search"><svg width="18" height="18" viewBox="0 0 18 18"><circle cx="7.300" cy="7.300" r="6.200" fill="none" stroke="#999" stroke-width="1.500"/><path d="M12 12L17 17" stroke="#999" stroke-width="1.500"/></svg><span>Search</span></div>
    <div class="tree">
      <div class="root"><svg width="11" height="7" viewBox="0 0 11 7"><path d="M1 1L5.500 5.500L10 1" fill="none" stroke="#fff" stroke-width="1.500"/></svg><svg class="tb" width="16" height="16" viewBox="0 0 16 16"><rect x="1" y="1" width="14" height="14" rx="2.500" fill="none" stroke="#ddd" stroke-width="1.500"/><path d="M5 1V15M11 1V15M1 5H15M1 11H15" stroke="#ddd" stroke-width="1.400"/></svg><span>cleaned_complaints</span></div>
      <div><i></i><span>complaint_text</span></div>
      <div><i></i><span>complaint_type</span></div>
      <div class="date"><svg class="dc" width="7" height="11" viewBox="0 0 7 11"><path d="M1 1L5.500 5.500L1 10" fill="none" stroke="#fff" stroke-width="1.500"/></svg><i></i><svg class="cal" width="16" height="16" viewBox="0 0 16 16"><rect x="1" y="1" width="14" height="14" rx="2.500" fill="none" stroke="#ddd" stroke-width="1.400"/><path d="M1 4.500H15" stroke="#ddd" stroke-width="1.400"/><path d="M6.500 8h1.500M9.500 8h1.500M3.500 11.500h1.500M6.500 11.500h1.500M9.500 11.500h1.500" stroke="#ddd" stroke-width="1.600"/></svg><span>date</span></div>
      <div><i></i><span>is_urgent</span></div>
      <div><i></i><span>ticket_id</span></div>
    </div>
  </aside>
</main>

<footer class="status">
  <span class="pg">Page 1 of 1</span>
  <svg class="zoom" width="158" height="16" viewBox="1653 999 158 16"><path d="M1655 1005.500H1661M1799 1005.500H1809M1804 1000V1012" stroke="#ddd" stroke-width="2"/><path d="M1667 1005.500H1792M1729.500 1002V1010" stroke="#ddd"/><path d="M1709 999h5v14h-5z" fill="#ddd"/></svg>
  <span class="pct">74%</span>
  <svg class="fit" width="18" height="14" viewBox="0 0 18 14"><path d="M2.500 1H15.500Q17 1 17 2.500V13H1V2.500Q1 1 2.500 1ZM4 7V4H7M11 4H14V7" fill="none" stroke="#ccc" stroke-width="1.300"/></svg>
</footer>
</body>
</html>
```
FILE: styles.css
```css
* { box-sizing: border-box; }
body {
  margin: 0; width: 1920px; height: 1007px; overflow: hidden;
  display: flex; flex-direction: column;
  background: #141414; color: #fff;
  font-family: "Open Sans", "Noto Sans", sans-serif; font-size: 14px;
}
.defs { position: absolute; }
h2, h3, h4 { margin: 0; }
svg { display: block; flex: none; overflow: visible; }
.w { fill: none; stroke: #d0d0d0; stroke-width: 1.5; }
.a { fill: none; stroke: #b8b8b8; stroke-width: 1.5; }
.dg { fill: #292929; stroke: #5f5f5f; stroke-width: 1.6; }
.db { fill: none; stroke: #2d5a7c; stroke-width: 1.5; }

/* title bar */
.titlebar { display: flex; height: 44px; flex: none; align-items: flex-start; color: #d6d6d6; }
.save { width: 19px; height: 19px; margin: 12px 0 0 21px; }
.undo { width: 17px; height: 19px; margin: 12px 0 0 20px; }
.redo { width: 17px; height: 19px; margin: 12px 0 0 20px; opacity: .4; }
.doc-title { width: 620px; margin: 15px 0 0 12px; line-height: 20px; font-size: 14px; letter-spacing: .13px; }
.top-search { display: flex; width: 500px; height: 30px; margin-top: 6px; background: #202020; border-radius: 3px; align-items: center; padding-left: 22px; gap: 15px; font-size: 15.500px; color: #bdbdbd; }
.top-search svg { width: 19px; height: 20px; }
.top-search span { padding-top: 1px; }
.signin { margin: 12px 0 0 408px; line-height: 20px; width: 57px; font-size: 14px; letter-spacing: .2px; white-space: nowrap; }
.avatar { width: 25px; height: 25px; margin-top: 9px; }
.wbtn { width: 14px; height: 14px; margin-top: 17px; }
.min { margin-left: 40px; } .max { margin-left: 41px; } .close { margin-left: 41px; }

/* ribbon tabs */
.tabs { display: flex; height: 44px; flex: none; padding-left: 29px; font-size: 16px; color: #d0d0d0; }
.tabs > span { line-height: 24px; height: 36px; margin-top: 7px; white-space: nowrap; }
.t-file { width: 70px; } .t-ins { width: 76px; } .t-mod { width: 107px; letter-spacing: .15px; } .t-view { width: 69px; } .t-opt { width: 103px; letter-spacing: .3px; } .t-help { width: 40px; }
.tabs .t-home { width: 49px; margin-right: 30px; height: 29px; border-bottom: 2px solid #2aac94; font-weight: 700; color: #fff; font-size: 16px; }
.share { display: flex; align-items: center; width: 104px; height: 30px; margin: 4px 7px 0 auto; padding-left: 8px; background: #0c695a; border-radius: 4px; color: #b7d0cb; font-size: 14px; letter-spacing: -.3px; }
.share-i { width: 20px; height: 18px; margin-right: 10px; }
.share-c { width: 12px; height: 8px; margin-left: 7px; }

/* ribbon */
.ribbon { display: flex; width: 1899px; height: 125px; margin-left: 10px; background: #292929; border-radius: 10px; flex: none; padding: 5px 0; position: relative; z-index: 2; }
.group { display: flex; flex-direction: column; justify-content: space-between; border-right: 1px solid #3f3f3f; height: 115px; flex: none; }
.g-clip { width: 201px; } .g-data { width: 450px; } .g-q { width: 145px; } .g-i { width: 184px; } .g-c { width: 233px; } .g-s { width: 92px; } .g-p { width: 72px; } .g-ai { width: 166px; }
.row { display: flex; justify-content: center; }
.g-q .row, .g-c .row, .g-ai .row { justify-content: flex-start; padding-left: 10px; }
.g-i .row, .g-data .row { justify-content: flex-start; padding-left: 11px; }
.gl { text-align: center; font-size: 12px; line-height: 16px; padding-bottom: 3px; }
.rb { display: flex; flex-direction: column; align-items: center; padding-top: 5px; flex: none; }
.rb span { line-height: 20px; white-space: nowrap; font-size: 14px; display: flex; align-items: center; }
.rb .ri + span { margin-top: 4px; }
.ri { width: 40px; height: 40px; }
.ch { width: 8px; height: 6px; margin: 3px 0 0 2px; }
.ch.sp { margin-left: 4px; }
.ch.solo { margin-left: 0; }
.dim, .dim span { color: #5f5f5f; }
.w48 { width: 48px; } .w52 { width: 52px; } .w53 { width: 53px; } .w54 { width: 54px; } .w56 { width: 56px; } .w58 { width: 58px; } .w64 { width: 64px; } .w66 { width: 66px; } .w68 { width: 68px; } .w71 { width: 71px; } .w72 { width: 72px; } .w90 { width: 90px; } .w92 { width: 92px; }
.clip-body { display: flex; }
.paste { width: 50px; margin-left: 10px; }
.clip-list { display: flex; flex-direction: column; padding: 4px 0 0 5px; gap: 12.500px; }
.clip-list div { display: flex; height: 20px; align-items: center; gap: 5px; }
.clip-list svg { width: 20px; height: 20px; }
.fx { font: italic 23px "Liberation Serif", serif; fill: #808080; }
.collapse { width: 12px; height: 8px; margin: 99px 0 0 335px; }

/* work area */
.work { display: flex; height: 777px; flex: none; }
.rail { width: 51px; flex: none; display: flex; flex-direction: column; border-right: 1px solid #333; }
.rail div { display: flex; align-items: center; justify-content: center; height: 50px; padding: 0 3px 3px 0; border-left: 3px solid transparent; }
.rail .on { border-left-color: #2aac94; }
.dax { font: 700 8.500px "Open Sans", sans-serif; fill: #e8e8e8; paint-order: stroke; stroke: #141414; stroke-width: 2px; }
.center { width: 1417px; display: flex; flex-direction: column; flex: none; }
.upper { display: flex; height: 733px; background: #fff; box-shadow: inset 0 5px 5px -3px #ccc; }
.canvas { width: 1190px; position: relative; flex: none; }
.visual { position: absolute; font-family: Roboto, sans-serif; }
.v-bar { left: 53px; top: 17px; }
.v-pie { left: 701px; top: 19px; }
.v-line { left: 53px; top: 357px; }
.v-stack { left: 685px; top: 332px; }
.page-edge { position: absolute; left: 2px; top: 669px; }
.ct { font-size: 15.500px; fill: #252423; font-weight: 400; stroke: #252423; stroke-width: .2px; }
.at { font-size: 13.500px; fill: #252423; font-weight: 400; stroke: #252423; stroke-width: .2px; }
.ax text, .lg { font-family: "Open Sans", sans-serif; font-size: 11px; fill: #605e5c; }
.cat text { font-family: "Open Sans", sans-serif; font-size: 11px; fill: #605e5c; text-anchor: end; }
.lt { font-family: "Open Sans", sans-serif; font-size: 11.500px; font-weight: 700; fill: #605e5c; }
.grid { fill: none; stroke: #d2d2d2; stroke-width: 1; stroke-dasharray: 1 4; }

/* filters pane */
.filters { width: 227px; border-left: 1px solid #b0b0b0; color: #252423; flex: none; }
.f-head { display: flex; height: 58px; padding: 0 15px 0 17px; align-items: flex-start; }
.f-head > svg:first-child { margin-top: 17px; }
.f-head h2 { font-size: 18.500px; line-height: 26px; margin: 13px 0 0 11px; width: 118px; font-weight: 600; letter-spacing: -.2px; }
.eye { margin-top: 17px; }
.fx2 { margin: 18px 0 0 27px; }
.f-search { display: flex; align-items: center; width: 201px; height: 42px; border: 1px solid #a6a6a6; border-radius: 2px; margin-left: 10px; padding-left: 15px; gap: 13px; font-size: 15.500px; }
.f-search span { padding-top: 1px; }
.f-sec { display: flex; justify-content: space-between; padding: 0 17px 0 10px; margin-top: 33px; height: 22px; line-height: 22px; margin-bottom: 11px; letter-spacing: .12px; }
.f-sec.first { margin-top: 5px; border-top: 1px solid #a6a6a6; padding-top: 20px; height: 43px; }
.f-sec i { font-style: normal; letter-spacing: -.3px; }
.f-box { width: 206px; height: 57px; border: 1px solid #444; border-radius: 2px; margin-left: 10px; display: flex; align-items: center; justify-content: center; padding-top: 1px; letter-spacing: .12px; }

/* page tabs */
.pages { display: flex; height: 44px; background: #292929; }
.mon { width: 30px; height: 39px; margin-left: 13px; padding: 9px 0 0 5px; border-bottom: 4px solid #2aac94; border-radius: 2px; }
.phone { margin: 8px 0 0 32px; }
.tl { margin: 15px 0 0 28px; }
.tr { margin: 15px 0 0 20px; }
.ptab { margin-left: 7px; width: 96px; border-left: 1px solid #707070; border-bottom: 5px solid #2aac94; text-align: center; line-height: 45px; height: 44px; font-weight: 600; font-size: 14.500px; letter-spacing: -.2px; }
.padd { width: 49px; background: #2aac94; display: flex; justify-content: center; padding-top: 13px; }

/* visualizations pane */
.viz { width: 227px; border-left: 1px solid #666; border-right: 1px solid #666; flex: none; }
.p-head { display: flex; justify-content: space-between; padding: 13px 13px 0 10px; height: 46px; }
.p-head h2 { font-size: 18.500px; line-height: 26px; font-weight: 600; letter-spacing: 0; }
.p-head svg { margin-top: 7px; }
.viz h3 { font-size: 14px; line-height: 22px; padding-left: 10px; margin-top: 2px; font-weight: 700; letter-spacing: -.25px; }
.modes { display: flex; padding: 3px 0 0 10px; height: 46px; }
.mode { width: 40px; height: 40px; background: #292929; border-radius: 3px; padding: 5px; }
.paint { margin: 5px 0 0 48px; }
.caret { margin-top: 2px; }
.icons { display: grid; grid-template-columns: repeat(6, 23px); grid-auto-rows: 23px; gap: 12px; padding: 13px 0 0 14px; }
.icons svg { width: 23px; height: 23px; }
.icons svg.tall { height: 25px; }
.v { fill: none; stroke: #c8c8c8; stroke-width: 1.3; }
.f { fill: #5f5f5f; stroke: #8c8c8c; stroke-width: 1; }
.b { fill: #0064bf; stroke: #6cb8f0; stroke-width: 1.1; }
.n123 { font: 11px "Open Sans", sans-serif; fill: #3a9ae8; }
.rt { font: 600 20px "Open Sans", sans-serif; fill: #3a9ae8; }
.py { font: 600 19px "Open Sans", sans-serif; fill: #3a9ae8; }
.dots { display: flex; gap: 4px; padding: 21px 0 0 19px; height: 47px; border-bottom: 1px solid #e8e8e8; }
.dots b { width: 2px; height: 2px; background: #fff; }
.wells { padding: 10px 7px 0 5px; letter-spacing: .1px; }
.lab { padding-left: 10px; line-height: 22px; height: 28px; }
.well { height: 35px; border: 1px dashed #777; border-radius: 2px; padding-left: 13px; line-height: 32px; white-space: nowrap; }
.wells h4 { font-size: 14.500px; line-height: 22px; padding-left: 10px; margin-top: 12px; letter-spacing: -.2px; }
.tg { display: flex; justify-content: space-between; align-items: center; height: 22px; margin-top: 10px; padding: 0 20px 0 10px; }
.keep { margin-top: 12px; }
.toggle { width: 40px; height: 20px; border-radius: 10px; display: flex; align-items: center; font-size: 11px; }
.toggle b { width: 10px; height: 10px; border-radius: 50%; }
.off { border: 1px solid #b0b0b0; color: #b0b0b0; padding-left: 5px; gap: 2px; }
.off b { background: #b0b0b0; }
.ont { background: #2aac94; color: #252423; padding-left: 7px; gap: 2px; }
.ont b { background: #252423; }
.black { background: #000; height: 32px; line-height: 31px; padding-left: 10px; margin-top: 10px; }

/* data pane */
.data { width: 225px; flex: none; }
.data .p-head { padding-left: 10px; }
.d-search { display: flex; align-items: center; width: 215px; height: 30px; margin: 12px 0 0 5px; border: 1px solid #666; border-bottom-color: #aaa; border-radius: 4px; background: #242424; padding-left: 14px; gap: 10px; color: #999; font-size: 15.500px; }
.d-search span { padding-top: 1px; }
.tree { padding-top: 11px; letter-spacing: .05px; }
.tree div { display: flex; align-items: center; height: 30px; padding-left: 55px; }
.tree i { width: 15px; height: 15px; border: 1px solid #aaa; border-radius: 2px; margin-right: 33px; }
.tree .root { padding-left: 18px; letter-spacing: .12px; }
.tb { margin: 0 7px 0 7px; }
.tree .date { padding-left: 39px; }
.dc { margin-right: 9px; }
.tree .date i { margin-right: 10px; }
.cal { margin-right: 7px; }

/* status bar */
.status { height: 17px; border-top: 1px solid #666; display: flex; overflow: hidden; color: #d0d0d0; flex: none; }
.status span { line-height: 20px; white-space: nowrap; height: 20px; }
.pg { width: 1648px; margin: 6px 0 0 5px; letter-spacing: .2px; }
.zoom { margin-top: 8px; }
.pct { width: 53px; margin: 3px 0 0 15px; }
.fit { margin-top: 9px; }
```
